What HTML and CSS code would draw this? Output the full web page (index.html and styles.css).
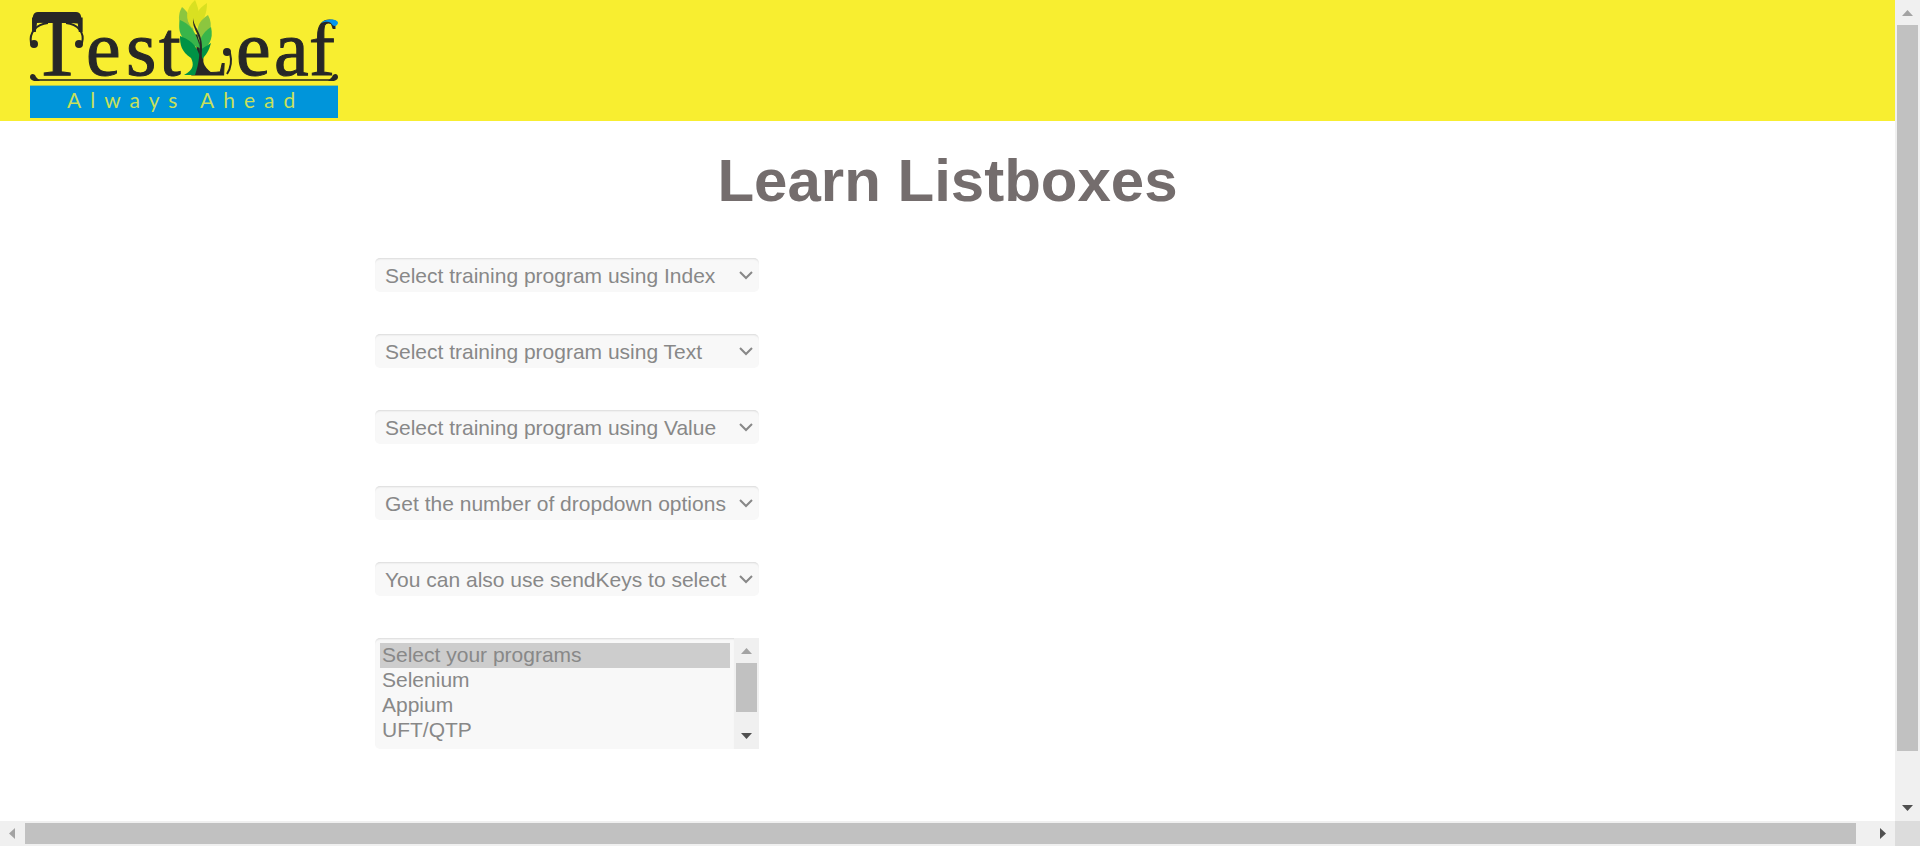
FILE: index.html
```
<!DOCTYPE html>
<html lang="en">
<head>
<meta charset="utf-8">
<title>Learn Listboxes</title>
<link rel="stylesheet" href="styles.css">
</head>
<body>
<div class="viewport">
  <div class="page">
    <header class="banner">
      <svg class="logo" viewBox="0 0 308 118" role="img" aria-label="TestLeaf, Always Ahead">
        <g class="logo-name">
          <text class="logo-initial" x="1" y="75">T</text>
          <text x="56 96 129" y="75">est</text>
          <text class="logo-l" x="160" y="75">L</text>
          <text x="206 244 279" y="75">eaf</text>
        </g>
        <path class="ink" d="M2 23L3 16Q4 12 8 12H46Q50 12 51 16L52 23C48 24 41 23 35 23H18C12 23 6 22 2 23Z"/>
        <circle cx="4" cy="44" r="4" class="ink"/>
        <circle cx="49" cy="44" r="4" class="ink"/>
        <path class="ink-line" d="M1 43C-1 33 6 24 18 23M52 43C55 33 48 24 36 23"/>
        <circle cx="197" cy="52" r="4" class="ink"/>
        <path class="ink-line" d="M200 53C202 61 201 68 197 74"/>
        <path fill="#8cc63f" d="M152 7C158 12 163 19 164 35L150 26C148 18 149 12 152 7Z"/>
        <path fill="#d9e021" d="M165 0C168 7 170 13 168 24L162 28C155 20 155 9 165 0Z"/>
        <path fill="#d9e021" d="M177 3C177 13 174 21 167 27C163 18 167 9 177 3Z"/>
        <path fill="#8cc63f" d="M178 15C184 26 180 35 170 43C164 31 168 21 178 15Z"/>
        <path fill="#39b54a" d="M150 20C160 24 166 31 170 48C157 45 146 36 150 20Z"/>
        <path fill="#39b54a" d="M181 27C184 40 178 47 170 52C168 40 172 33 181 27Z"/>
        <path fill="#009245" d="M150 36C160 40 173 46 171 75H154C164 70 164 64 161 58C151 51 150 45 150 36Z"/>
        <path fill="#009245" d="M181 43C179 50 177 55 169 62L170 50Z"/>
        <path class="ink" d="M163 18C164 28 173 33 172 50C171 58 173 67 182 73L183 75H165C169 64 170 52 170 43C169 33 162 29 163 18Z"/>
        <path fill="#0095ee" d="M291 23C297 18 308 19 308 23C307 27 303 27 301 23C298 21 295 22 291 23Z"/>
        <path class="ink-rule" d="M6 80H302"/>
        <path class="ink" d="M0 77C0 73 5 73 6 77L10 81H6C2 81 0 79 0 77ZM308 77C308 73 303 73 302 77L298 81H302C306 81 308 79 308 77Z"/>
        <rect y="86" width="308" height="32" fill="#0095da"/>
        <rect y="85" width="308" height="1" fill="#9ac86a"/>
        <text class="logo-tag" x="37" y="108">Always Ahead</text>
      </svg>
    </header>
    <main class="content">
      <h1 class="title">Learn Listboxes</h1>
      <form class="lists">
        <div class="field">
          <select class="dropdown" aria-label="Training program by index"><option>Select training program using Index</option></select>
          <svg class="chevron" viewBox="0 0 14 9" aria-hidden="true"><path d="M1 1L7 7L13 1"/></svg>
        </div>
        <div class="field">
          <select class="dropdown" aria-label="Training program by text"><option>Select training program using Text</option></select>
          <svg class="chevron" viewBox="0 0 14 9" aria-hidden="true"><path d="M1 1L7 7L13 1"/></svg>
        </div>
        <div class="field">
          <select class="dropdown" aria-label="Training program by value"><option>Select training program using Value</option></select>
          <svg class="chevron" viewBox="0 0 14 9" aria-hidden="true"><path d="M1 1L7 7L13 1"/></svg>
        </div>
        <div class="field">
          <select class="dropdown" aria-label="Number of options"><option>Get the number of dropdown options</option></select>
          <svg class="chevron" viewBox="0 0 14 9" aria-hidden="true"><path d="M1 1L7 7L13 1"/></svg>
        </div>
        <div class="field">
          <select class="dropdown" aria-label="Send keys"><option>You can also use sendKeys to select</option></select>
          <svg class="chevron" viewBox="0 0 14 9" aria-hidden="true"><path d="M1 1L7 7L13 1"/></svg>
        </div>
        <div class="field multi">
          <select class="listbox" multiple size="4" aria-label="Programs">
            <option selected>Select your programs</option>
            <option>Selenium</option>
            <option>Appium</option>
            <option>UFT/QTP</option>
          </select>
          <div class="bar vertical" aria-hidden="true">
            <svg class="arrow dim" viewBox="0 0 25 25"><path d="M7 16L12.500 10L18 16Z"/></svg>
            <div class="run"><div class="thumb short"></div></div>
            <svg class="arrow" viewBox="0 0 25 25"><path d="M7 9H18L12.500 15Z"/></svg>
          </div>
        </div>
      </form>
    </main>
  </div>
  <div class="bar vertical" aria-hidden="true">
    <svg class="arrow dim" viewBox="0 0 25 25"><path d="M7 16L12.500 10L18 16Z"/></svg>
    <div class="run"><div class="thumb tall"></div></div>
    <svg class="arrow" viewBox="0 0 25 25"><path d="M7 9H18L12.500 15Z"/></svg>
  </div>
  <div class="bar horizontal" aria-hidden="true">
    <svg class="arrow dim" viewBox="0 0 25 25"><path d="M15 7L9 12.500L15 18Z"/></svg>
    <div class="run"><div class="thumb wide"></div></div>
    <svg class="arrow" viewBox="0 0 25 25"><path d="M10 7L16 12.500L10 18Z"/></svg>
  </div>
  <div class="corner"></div>
</div>
</body>
</html>
```
FILE: styles.css
```
* {
  box-sizing: border-box;
}

body {
  margin: 0;
  background: #fff;
  color: #888;
  font-family: "Liberation Sans", Arial, sans-serif;
  font-size: 21px;
}

.viewport {
  display: grid;
  grid-template-columns: minmax(0, 1fr) 25px;
  grid-template-rows: minmax(0, 1fr) 25px;
  height: 100vh;
}

.page {
  overflow: hidden;
}

.banner {
  padding: 0 30px 3px;
  background: #f8ee30;
}

.logo {
  display: block;
  width: 308px;
  overflow: visible;
}

.logo-name {
  font-family: "Liberation Serif", "Times New Roman", serif;
  font-size: 78px;
  fill: #272727;
  stroke: #272727;
  stroke-width: 1;
}

.logo-initial {
  font-size: 86px;
}

.logo-l {
  font-size: 62px;
}

.logo-tag {
  font-family: Lato, sans-serif;
  font-size: 21px;
  letter-spacing: 9px;
  fill: #c8e05a;
}

.ink {
  fill: #272727;
}

.ink-line {
  fill: none;
  stroke: #272727;
  stroke-width: 2;
}

.ink-rule {
  stroke: #57531f;
  stroke-width: 2;
}

.title {
  margin: 0;
  padding: 25px 0 42px;
  color: #746d6d;
  font-size: 60px;
  line-height: 70px;
  text-align: center;
}

.lists {
  display: flex;
  flex-direction: column;
  gap: 42px;
  width: 384px;
  margin-left: 375px;
}

.field {
  position: relative;
  display: flex;
}

.dropdown,
.listbox {
  flex: 1;
  min-width: 0;
  margin: 0;
  border: 0;
  border-radius: 5px;
  background: #f8f8f8;
  box-shadow: inset 0 2px 2px -1px rgba(0, 0, 0, 0.12);
  color: #888;
  font: inherit;
  outline: 0;
}

.dropdown {
  height: 34px;
  padding: 0 10px;
  appearance: none;
}

.chevron {
  position: absolute;
  top: 13px;
  right: 6px;
  width: 14px;
  height: 9px;
  fill: none;
  stroke: #888;
  stroke-width: 2;
  pointer-events: none;
}

.listbox {
  height: 111px;
  padding: 5px 4px 5px 5px;
  border-radius: 5px 0 0 5px;
  overflow: hidden;
  scrollbar-width: none;
}

.listbox option {
  min-height: 25px;
  padding: 0 2px;
  line-height: 25px;
  color: #888;
}

.listbox option:checked {
  background: #cdcdcd linear-gradient(#cdcdcd, #cdcdcd);
  color: #888;
}

.bar {
  display: flex;
  background: #f0f0f0;
}

.vertical {
  flex-direction: column;
  width: 25px;
}

.horizontal {
  height: 25px;
}

.arrow {
  flex: none;
  width: 25px;
  height: 25px;
  fill: #505050;
}

.dim {
  fill: #a3a3a3;
}

.run {
  flex: 1;
  min-width: 0;
  min-height: 0;
}

.vertical .run {
  padding: 0 2px;
}

.horizontal .run {
  padding: 2px 0;
}

.thumb {
  height: 100%;
  background: #c1c1c1;
}

.tall {
  height: calc(100% - 45px);
}

.short {
  height: 80%;
}

.wide {
  width: calc(100% - 14px);
}

.corner {
  background: #dcdcdc;
}
```
